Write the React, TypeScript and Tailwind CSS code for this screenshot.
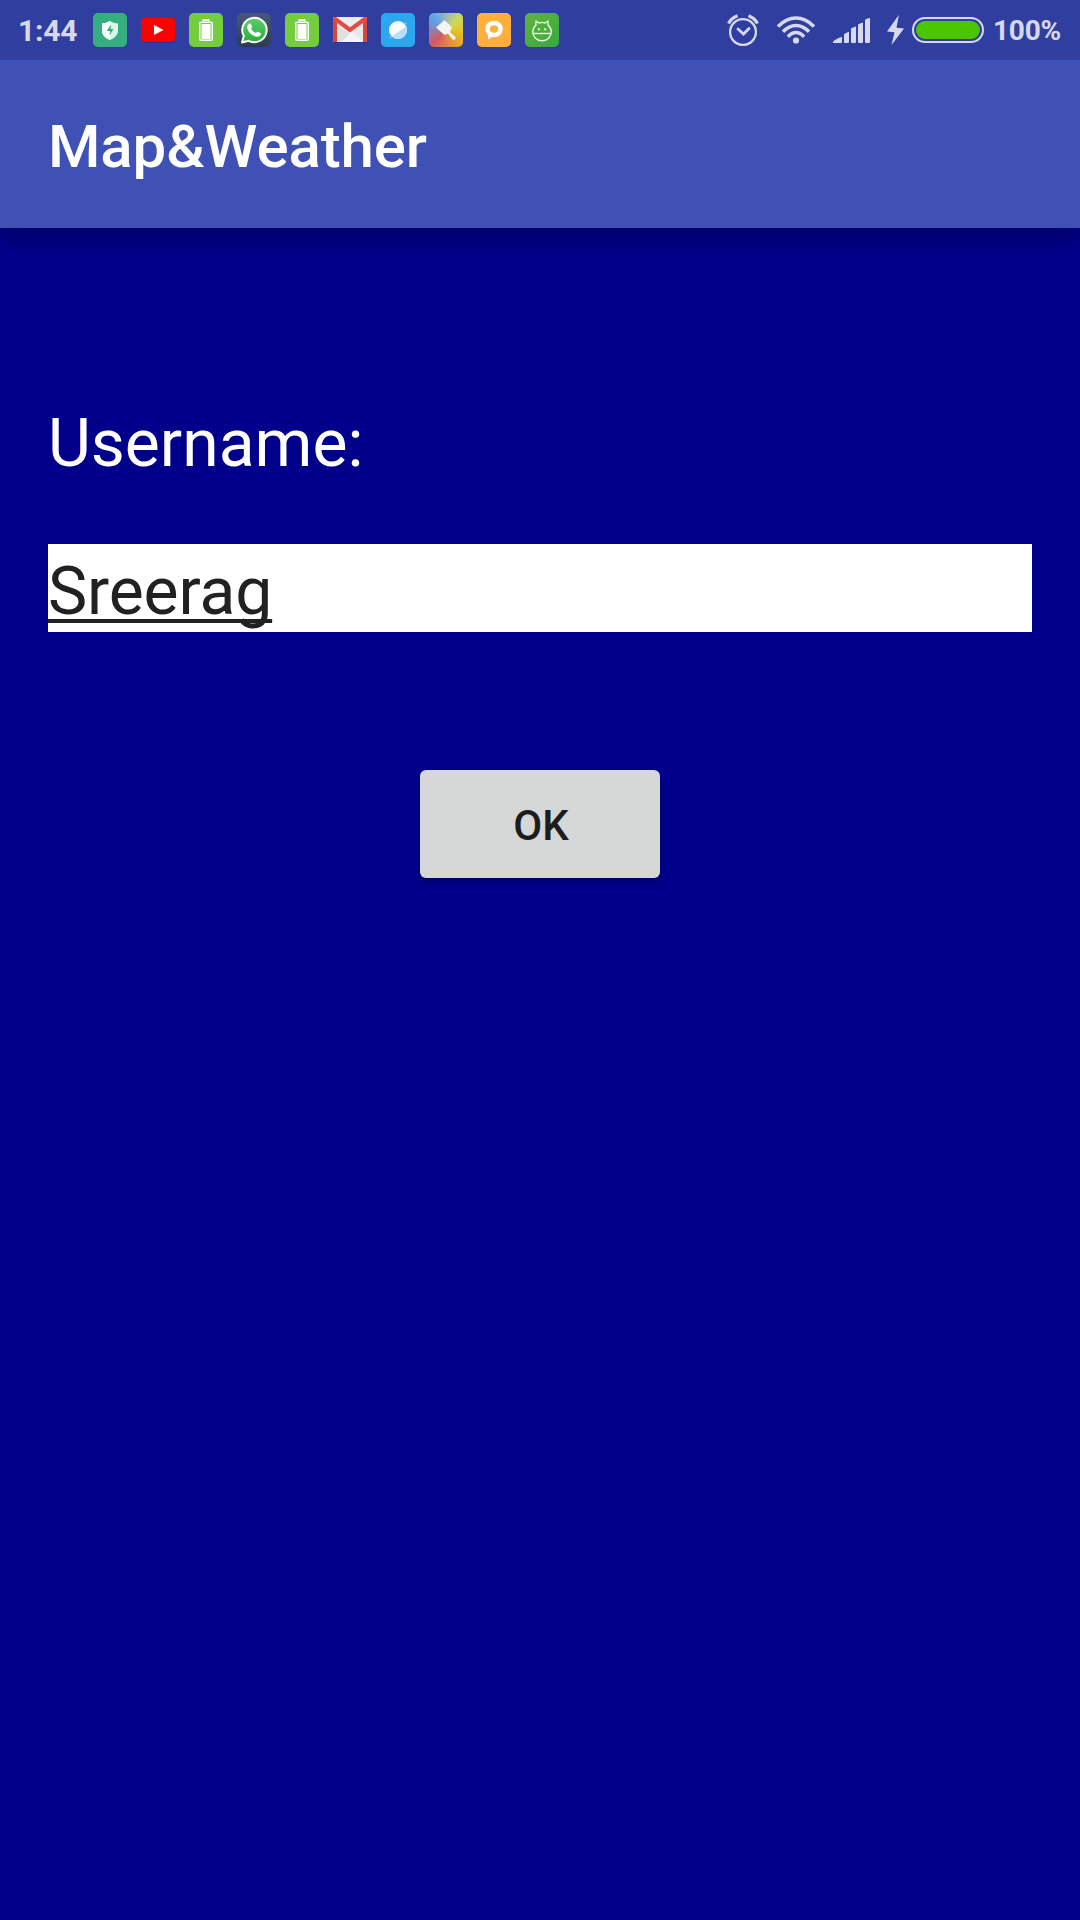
import type { ReactNode } from "react";

function Tile({ children }: { children: ReactNode }) {
  return (
    <svg className="block size-[34px] shrink-0" viewBox="0 0 34 34" aria-hidden="true">
      {children}
    </svg>
  );
}

function ShieldIcon() {
  return (
    <Tile>
      <rect width="34" height="34" rx="5" fill="#35ae80" />
      <path d="M17 8c2.400 1.600 5 2.300 8 2.500v7c0 4.600-3.600 7.800-8 9.500-4.400-1.700-8-4.900-8-9.500v-7c3-.2 5.600-.9 8-2.500z" fill="#d8fbea" />
      <path d="M17 8v19c-4.400-1.700-8-4.900-8-9.500v-7c3-.2 5.600-.9 8-2.500z" fill="#fff" />
      <path d="M18 11.500L13.800 18h3.400l-.7 4.500 4-6.500h-3z" fill="#35ae80" />
    </Tile>
  );
}

function YoutubeIcon() {
  return (
    <Tile>
      <rect y="6" width="34" height="24" rx="4" fill="#26328f" />
      <rect y="5" width="34" height="24" rx="4" fill="#f00" />
      <path d="M13 12l9.500 5-9.500 5z" fill="#fff" />
    </Tile>
  );
}

function BatteryAppIcon() {
  return (
    <Tile>
      <rect width="34" height="34" rx="5" fill="#73cd3e" />
      <path d="M13.500 6h7v2h-7z" fill="#fff" />
      <rect x="10.750" y="9.250" width="12.500" height="18" rx="1" fill="#73cd3e" stroke="#fff" strokeWidth="1.500" />
      <rect x="12.500" y="11" width="9" height="15" fill="#fff" />
    </Tile>
  );
}

function WhatsappIcon() {
  return (
    <Tile>
      <defs>
        <linearGradient id="wa-bg" x2="0" y2="1">
          <stop stopColor="#485978" />
          <stop offset="1" stopColor="#2b3b50" />
        </linearGradient>
        <linearGradient id="wa-bubble" x2="0" y2="1">
          <stop stopColor="#5bcf6b" />
          <stop offset="1" stopColor="#26ad3d" />
        </linearGradient>
      </defs>
      <rect width="34" height="34" rx="6" fill="url(#wa-bg)" />
      <path d="M5 29.500l1.800-6.500A12.200 12.200 0 1 1 11.700 27.800z" fill="url(#wa-bubble)" stroke="#fff" strokeWidth="2" strokeLinejoin="round" />
      <path d="M12.300 10.500c.8-.3 1.500 0 1.800.8l.9 2.200c.2.600-.2 1.200-1 2 1.200 2.200 2.700 3.600 5 4.600.9-1.100 1.300-1.600 2-1.300l2.500 1.200c.8.400.7 1 .3 1.800-1 1.800-2.900 2.400-5.200 1.700-4.300-1.300-7.200-4.200-8.300-8-.5-2 .3-4.200 2-5z" fill="#fff" />
    </Tile>
  );
}

function GmailIcon() {
  return (
    <Tile>
      <rect y="5" width="34" height="25" rx="1.500" fill="#26328f" />
      <rect y="4" width="34" height="25" rx="1.500" fill="#e9e9e9" />
      <path d="M4 29L17 17l13 12z" fill="#f5f5f5" />
      <path d="M4 29V13l13 7-8 9z" fill="#e0e0e0" />
      <path d="M4 6h26L17 17z" fill="#eee" />
      <path d="M0 6l4 3v20H1.500A1.500 1.500 0 0 1 0 27.500zM34 6l-4 3v20h2.500a1.500 1.500 0 0 0 1.500-1.500z" fill="#d8473c" />
      <path d="M0 7V5.500A1.500 1.500 0 0 1 1.500 4H3l14 10.300L31 4h1.500A1.500 1.500 0 0 1 34 5.500V7L17 19.500z" fill="#e54b40" />
    </Tile>
  );
}

function BrowserIcon() {
  return (
    <Tile>
      <rect width="34" height="34" rx="5" fill="#2ca6ef" />
      <circle cx="17" cy="17" r="9" fill="#fff" />
      <path d="M25.200 13.200A9 9 0 0 1 10.800 23.500z" fill="#badffb" />
      <path d="M23.400 9.800l2.200-.3-.3 2.300zM8.800 22.800v2.300l2.200-.5z" fill="#8fcdf7" />
    </Tile>
  );
}

function BrushIcon() {
  return (
    <div className="size-[34px] shrink-0 overflow-hidden rounded-[5px] bg-[conic-gradient(#9cb7ba,#c9da60_45deg,#e2c72d_90deg,#e9a721_135deg,#df814b_180deg,#d35a62_225deg,#8d80b2_270deg,#59a6ec_315deg,#9cb7ba)]">
      <svg className="block size-[34px]" viewBox="0 0 34 34" aria-hidden="true">
        <path d="M15.500 7l7.500 7.500-2 4.500 5 4.500c1 1.200.7 3.300-.8 3.300s-2-.3-2.700-1.500L19 20.500 15.500 22 7 14.500z" fill="#f6f5f5" />
      </svg>
    </div>
  );
}

function ChatRingIcon() {
  return (
    <Tile>
      <rect width="34" height="34" rx="5" fill="#ffb03c" />
      <path d="M11 20v6.500l5-3.500z" fill="#fff" />
      <ellipse cx="17" cy="16" rx="6.500" ry="6" fill="none" stroke="#fff" strokeWidth="4.600" />
    </Tile>
  );
}

function RobotIcon() {
  return (
    <Tile>
      <defs>
        <linearGradient id="robot-bg" x2="1" y2="1">
          <stop stopColor="#63b33b" />
          <stop offset="1" stopColor="#35aa42" />
        </linearGradient>
      </defs>
      <rect width="34" height="34" rx="5" fill="url(#robot-bg)" />
      <g fill="none" stroke="#e9f7dd" strokeWidth="1.400" strokeLinejoin="round">
        <path d="M11 12V8l3 2c2-.8 4-.8 6 0l3-2v4c2 1.800 3.200 4 3.200 6.500 0 5.500-4 9.300-9.200 9.300S7.800 24 7.800 18.500c0-2.500 1.200-4.700 3.200-6.500z" />
        <path d="M7.500 20.500h19" />
      </g>
      <path d="M12.800 15.200h2v2h-2zM19.200 15.200h2v2h-2z" fill="#e9f7dd" />
    </Tile>
  );
}

function AlarmIcon() {
  return (
    <svg className="h-8 w-8" viewBox="0 0 32 32" fill="none" stroke="#d6d9ec" aria-hidden="true">
      <circle cx="16" cy="18" r="12.900" strokeWidth="2.300" />
      <path d="M1.500 9.500Q4.500 4 10.500 1.800M30.500 9.500Q27.500 4 21.500 1.800" strokeWidth="3.200" />
      <path d="M11 15l5.500 5 5.500-5.500" strokeWidth="2.800" strokeLinecap="round" />
    </svg>
  );
}

function WifiIcon() {
  return (
    <svg className="ml-[17px] h-7 w-[40px]" viewBox="0 0 40 28" fill="none" stroke="#d6d9ec" aria-hidden="true">
      <path d="M2 10.500Q10.500 2 20 2t18 8.500M7 15.800Q13 9.500 20 9.500t13 6.300M12 20.800Q15.500 16.500 20 16.500t8 4.300" strokeWidth="3.500" />
      <circle cx="20" cy="24.500" r="3.100" fill="#d6d9ec" stroke="none" />
    </svg>
  );
}

function SignalIcon() {
  return (
    <svg className="ml-[17px] h-[25px] w-[37px]" viewBox="0 0 37 25" fill="#d6d9ec" aria-hidden="true">
      <path d="M0 25v-1.300Q3 20.500 9 19v5q0 1-1 1zM11 16.500q1.500-1.800 5-2.700v10q0 1.200-1 1.200h-3q-1 0-1-1zM18 10.500q1.500-1 5-2v15.500q0 1-1 1h-3q-1 0-1-1zM25 6.500q1.500-1 5-2v19.500q0 1-1 1h-3q-1 0-1-1zM32 2q1-1.300 5-2v24q0 1-1 1h-3q-1 0-1-1z" />
    </svg>
  );
}

function BoltIcon() {
  return (
    <svg className="ml-[17px] h-[30px] w-[17px]" viewBox="0 0 17 30" fill="#d6d9ec" aria-hidden="true">
      <path d="M11.800 0L0 16.500l7.500.8L4.500 30 17 13.500l-7.500-.8z" />
    </svg>
  );
}

function StatusBar() {
  return (
    <div className="flex h-[60px] items-center bg-[#303f9f] pl-[18px] pr-[18px] text-[30px] font-bold leading-[60px] text-[#d6d9ec]">
      <span className="w-[75px] shrink-0 pt-px text-[30px] tracking-[-0.2px]">1:44</span>
      <div className="flex gap-[14px]">
        <ShieldIcon />
        <YoutubeIcon />
        <BatteryAppIcon />
        <WhatsappIcon />
        <BatteryAppIcon />
        <GmailIcon />
        <BrowserIcon />
        <BrushIcon />
        <ChatRingIcon />
        <RobotIcon />
      </div>
      <div className="ml-auto flex items-center">
        <AlarmIcon />
        <WifiIcon />
        <SignalIcon />
        <BoltIcon />
        <div className="ml-2 h-[26px] w-[72px] rounded-full border-2 border-[#d6d9ec] p-[2px]">
          <div className="h-full rounded-full bg-[#4ac500]" />
        </div>
        <span className="ml-[9px] w-[69px] pt-[2px] text-[28px] leading-[58px] tracking-[-0.2px]">100%</span>
      </div>
    </div>
  );
}

export default function App() {
  return (
    <div className="flex h-[1920px] w-[1080px] flex-col overflow-hidden bg-[#00008b] font-['Roboto',sans-serif]">
      <header className="relative shrink-0 shadow-[0_12px_20px_rgba(0,0,0,0.25)]">
        <StatusBar />
        <div className="flex h-[168px] items-center bg-[#3f51b5] px-12 pt-[5px]">
          <h1 className="text-[60px] font-medium leading-[72px] tracking-[-0.1px] text-white">Map&amp;Weather</h1>
        </div>
      </header>
      <main className="flex flex-col items-start px-12 pt-[176px]">
        <label htmlFor="username" className="text-[66px] leading-[80px] text-white">
          Username:
        </label>
        <input
          id="username"
          type="text"
          defaultValue="Sreerag"
          spellCheck={false}
          className="mt-[60px] h-[88px] w-full bg-white pt-[7px] text-[66px] leading-[78px] tracking-[-0.12px] text-[#212121] underline decoration-[4px] underline-offset-[5px] outline-none [text-decoration-skip-ink:none]"
        />
        <button
          type="button"
          className="mt-[138px] h-[108px] w-60 self-center rounded-[6px] bg-[#d6d7d7] pl-[2px] pt-[3px] text-[42px] font-medium text-[#1d1d1d] shadow-[0_3px_6px_rgba(0,0,0,0.25)]"
        >
          OK
        </button>
      </main>
    </div>
  );
}
